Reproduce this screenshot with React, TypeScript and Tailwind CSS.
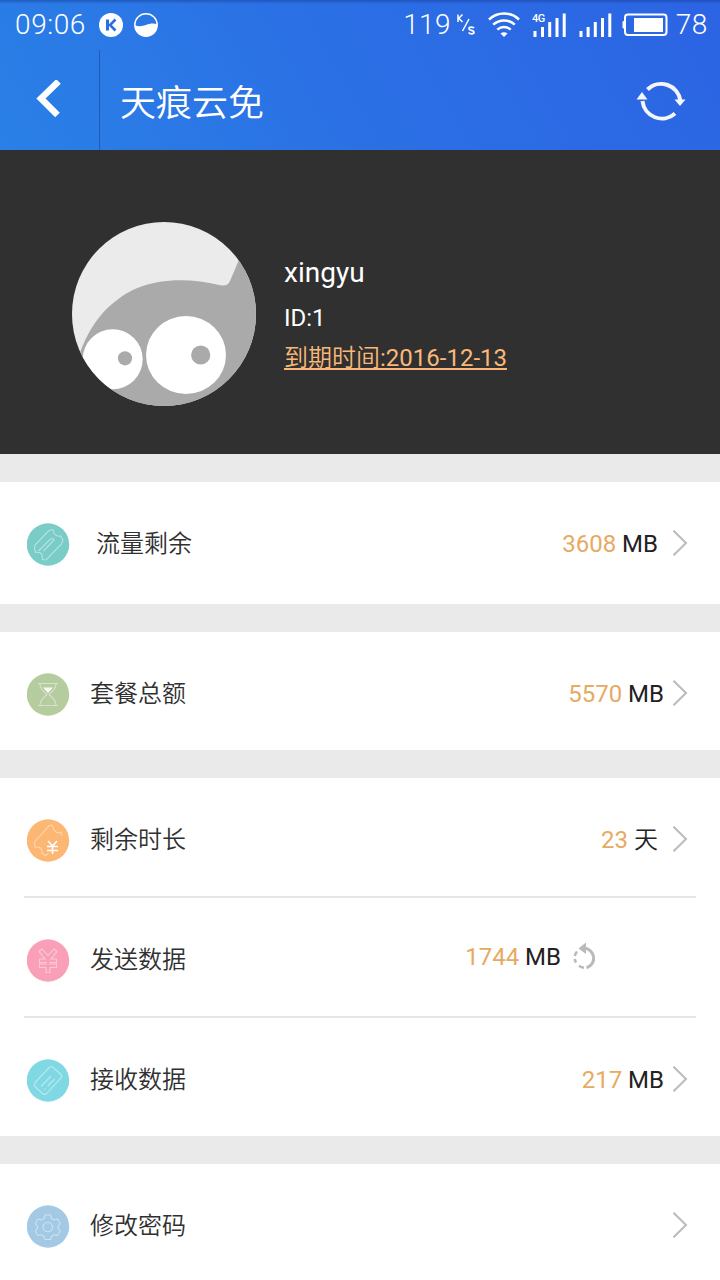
import type { ReactNode } from 'react';
import clsx from 'clsx';

interface RowProps {
  icon: ReactNode;
  label: string;
  value?: string;
  unit?: string;
  // some rows use slightly different spacing around the label and the value
  labelClass?: string;
  valueClass?: string;
  rowClass?: string;
  trailing?: ReactNode;
}

function StatusBar() {
  return (
    <div className="flex h-[50px] items-center pl-[15px] pr-[12px] text-[28px] font-[350] leading-none tracking-[0.6px] text-white">
      <span className="w-[84px]">09:06</span>
      <svg width="24" height="24" viewBox="0 0 24 24" className="mr-[11px]">
        <circle cx="12" cy="12" r="12" fill="#fff" />
        <path d="M8.500 6.500v11" fill="none" stroke="#2c6fe2" strokeWidth="3" />
        <path d="M16.500 6.500 11 12l5.500 5.500" fill="none" stroke="#2c6fe2" strokeWidth="2.600" />
      </svg>
      <svg width="24" height="24" viewBox="0 0 24 24">
        <circle cx="12" cy="12" r="11.200" fill="none" stroke="#fff" strokeWidth="1.400" />
        <path d="M.8 12.200C5 13.800 8.500 13.300 12 12s7-2 11.200-.8A11.300 11.300 0 0 1 12 23.300 11.300 11.300 0 0 1 .8 12.200z" fill="#fff" />
      </svg>

      <div className="ml-auto flex items-center">
        <span className="tracking-[0.300px]">119</span>
        <svg width="20" height="24" viewBox="0 0 20 24" className="ml-[5px]" fill="none" stroke="#fff">
          <path d="M2 1.500v7.500M6.500 1.500 2.800 5.200 6.500 9" strokeWidth="1.500" />
          <path d="M13 6 6.500 18" strokeWidth="1.500" />
          <path d="M18 15.200c-.5-1.200-5-1.600-5 .5 0 2.200 5 1.200 5 3.500 0 2.200-4.800 2-5.200.2" strokeWidth="1.700" />
        </svg>
        <svg width="32" height="26" viewBox="0 0 32 26" className="ml-[12px]" fill="none" stroke="#fff" strokeWidth="2.500">
          <path d="M1 7.500c8.500-8 21.500-8 30 0" />
          <path d="M5.200 12.600c6.200-5.600 15.400-5.600 21.600 0" />
          <path d="M9.300 17.600c4-3.500 9.400-3.500 13.400 0" />
          <path d="M12.500 21.500c2-1.700 5-1.700 7 0L16 25z" fill="#fff" stroke="none" />
        </svg>
        <svg width="34" height="26" viewBox="0 0 34 26" className="ml-[12px]" fill="#fff">
          <text x="0" y="10" fontSize="11" fontWeight="500" letterSpacing="-0.500">4G</text>
          <path d="M1.500 19h3v6h-3zM9 15h3v10H9zM16.200 10h3v15h-3zM23.500 6h3v19h-3zM30.700 1.500h3V25h-3z" />
        </svg>
        <svg width="33" height="26" viewBox="0 0 33 26" className="ml-[13px]" fill="#fff">
          <path d="M.5 19h3v6h-3zM7.600 15h3v10h-3zM14.800 10h3v15h-3zM22 6h3v19h-3zM29.300 1.500h3V25h-3z" />
        </svg>
        <svg width="46" height="24" viewBox="0 0 46 24" className="ml-[10px]">
          <rect x="3" y="1.500" width="41.500" height="20.500" rx="3" fill="none" stroke="#fff" strokeWidth="2" />
          <rect x="0.500" y="8" width="2.500" height="7.500" rx="1" fill="#fff" />
          <rect x="12" y="5" width="29" height="14" fill="#fff" />
        </svg>
        <span className="ml-[8px]">78</span>
      </div>
    </div>
  );
}

function Header() {
  return (
    <header className="h-[150px] shrink-0 bg-[linear-gradient(180deg,rgba(20,60,150,0.5)_0,rgba(20,60,150,0)_4px),linear-gradient(60deg,#2a80e6_0%,#2b6fe5_50%,#2c64e3_100%)]">
      <StatusBar />
      <div className="flex h-[100px] items-center">
        <div className="flex h-full w-[100px] items-center border-r border-[#2258b8] pl-[35px]">
          <svg width="28" height="40" viewBox="0 0 28 40" fill="none" stroke="#fff" strokeWidth="6.500">
            <path d="M23.500 1.500 6 18.500 22.500 35" />
          </svg>
        </div>
        <h1 className="ml-[20px] pt-[7px] text-[36px] font-[350] leading-none text-white">天痕云免</h1>
        <svg width="50" height="46" viewBox="0 0 50 46" className="ml-auto mr-[34px] mt-[2px]" fill="none" stroke="#f4f6fb" strokeWidth="4">
          <path d="M11.500 11.500A19.500 19.500 0 0 1 44.500 23" />
          <path d="M39 35.500A19.500 19.500 0 0 1 6.500 23" />
          <path d="M38.500 21.500h11L44 28z" fill="#f4f6fb" stroke="none" />
          <path d="M0.500 21.500h11L6 14z" fill="#f4f6fb" stroke="none" />
        </svg>
      </div>
    </header>
  );
}

function Avatar() {
  return (
    <svg width="184" height="184" viewBox="0 0 184 184">
      <clipPath id="face">
        <circle cx="92" cy="92" r="92" />
      </clipPath>
      <g clipPath="url(#face)">
        <rect width="184" height="184" fill="#ebebeb" />
        <path d="M6 137C18 99 39 78 64.700 66.300 92 55.500 121 57 147 63c6 1.200 9 .5 11-4l14-33 20-10v170H0z" fill="#aaa" />
        <circle cx="40.700" cy="137.300" r="30" fill="#fff" />
        <circle cx="53" cy="136.300" r="7.100" fill="#aaa" />
        <ellipse cx="114" cy="133" rx="40" ry="39" fill="#fff" />
        <circle cx="128.700" cy="133" r="9.600" fill="#aaa" />
      </g>
    </svg>
  );
}

function Profile() {
  return (
    <section className="flex h-[304px] shrink-0 items-start bg-[#303030] pl-[72px] pt-[72px]">
      <Avatar />
      <div className="ml-[28px] pt-[32px] text-white">
        <div className="text-[28px] leading-[38px]">xingyu</div>
        <div className="mt-[8px] text-[24px] leading-[36px]">ID:1</div>
        <div className="mt-[4px] text-[24px] leading-[36px] text-[#fab878] underline decoration-2 underline-offset-2">
          <span className="font-[350]">到期时间</span>:2016-12-13
        </div>
      </div>
    </section>
  );
}

function Badge({ color, children }: { color: string; children: ReactNode }) {
  return (
    <svg width="43" height="43" viewBox="0.500 0 43 43" className="shrink-0" fill="none" stroke="#fff" strokeOpacity="0.450" strokeWidth="1.100">
      <circle cx="21.500" cy="21.500" r="21.200" fill={color} stroke="none" />
      {children}
    </svg>
  );
}

const ticketIcon = (
  <Badge color="#79ccc8">
    <path d="M22 8 25.500 6.500q2 .5 2 4 2.500 3.500 6.500 2.500l2.500 4-1.500 4-15.500 16-3.500-.5-.5-4.500q-1-3.500-6.500-2.500L8 26l.5-4z" />
    <path d="M24 16 13.500 26.500q-2 2-1 .5M24 16q3-1 3.500 1L17 28" />
  </Badge>
);

const hourglassIcon = (
  <Badge color="#b5cc9e">
    <path d="M11.500 10.500h20M11.500 32.500h20M13.500 11q0 5 7 10.500-7 5.500-7 10.500M29.500 11q0 5-7 10.500 7 5.500 7 10.500" />
    <path d="M16.500 14.500h10l-5 5.500z" fill="#fff" fillOpacity="0.950" stroke="none" />
  </Badge>
);

const couponIcon = (
  <Badge color="#fdb775">
    <path d="M8 23 22.500 7q3-2 4 .5l1 3.500q3 4 7 2.500l1 3M8 23l.5 5 4.500.5q3 1.500 2.500 6l3.500 2 3-2" />
    <path d="m21.500 22 4.500 5 4.500-5M20.500 27.500h11M20.500 31.500h11M26 27v8" stroke="#fff" strokeOpacity="1" strokeWidth="1.600" />
  </Badge>
);

const yenIcon = (
  <Badge color="#f99fb7">
    <path d="m12.500 12.500 3-2.500 6 6.500 6-6.500 3 2.500-6 7.500h5.500v3.500h-6.500V25H30v3.500h-6.500v5h-4v-5H13V25h6.500v-1.500H13V20h5.500z" />
  </Badge>
);

const cardIcon = (
  <Badge color="#7fd8e3">
    <path d="m8.200 24 14.500-15.500q2-2 4 0l7.800 7q1.500 1.500 0 3.300L20 34.500q-2 2-4 0l-7.500-7q-1.500-1.500-.3-3.500z" />
    <path d="M24.500 17 14.500 27.500M28 20 21 27.500M19 29.500l-1 1" />
  </Badge>
);

const gearIcon = (
  <Badge color="#a3c9e5">
    <path d="m18.500 10 5.500 0 1 3.500 2.500 1.500 3.500-1 2.800 4.500-2.300 2.800v2l2.300 2.700-2.800 4.500-3.500-.8-2.500 1.600-1 3.200h-5.500l-1-3.200-2.500-1.600-3.500.8L8.700 26l2.300-2.700v-2l-2.300-2.800L11.500 14l3.500 1 2.500-1.500z" strokeLinejoin="round" />
    <circle cx="21.300" cy="22" r="4.800" />
  </Badge>
);

const chevron = (
  <svg width="16" height="28" viewBox="0 0 16 28" fill="none" stroke="#bcbcbc" strokeWidth="2.100">
    <path d="m1.500 1.700 12.500 12.300L1.500 26.300" />
  </svg>
);

const resetIcon = (
  <svg width="26" height="28" viewBox="0 0 26 28" fill="none" stroke="#bababa" strokeWidth="3">
    <path d="M12 6.200a10 10 0 0 1 2.500 19.600" />
    <path d="M12 25.800a10 10 0 0 1-5-2M4 20.500a10 10 0 0 1-1.300-3.500M2.800 14A10 10 0 0 1 5 9.500" strokeWidth="2.600" />
    <path d="M14 .5v11.500L6.500 6.500z" fill="#bababa" stroke="none" />
  </svg>
);

function Row({ icon, label, value, unit, labelClass, valueClass, rowClass, trailing = chevron }: RowProps) {
  return (
    <div className={clsx('flex items-center bg-white pl-[27px] text-[24px] leading-none', rowClass ?? 'h-[118px] pr-[32px] pt-[6px]')}>
      {icon}
      <span className={clsx('font-[350] text-[#303030]', labelClass ?? 'ml-[20px]')}>{label}</span>
      <div className={clsx('ml-auto flex items-center', valueClass ?? 'gap-[8px] pb-[2px]')}>
        {value && (
          <span className="whitespace-nowrap pt-[2px] text-[#222]">
            <span className="text-[#e6aa62]">{value}</span> <span className={clsx(unit === '天' && 'font-[350]')}>{unit}</span>
          </span>
        )}
        {trailing}
      </div>
    </div>
  );
}

function Divider() {
  return <div className="mx-6 h-[2px] bg-[#e6e6e6]" />;
}

export default function App() {
  return (
    <div className="flex h-[1280px] w-[720px] flex-col overflow-hidden bg-[#eaeaea] font-[Roboto,'Noto_Sans_CJK_SC',sans-serif]">
      <Header />
      <Profile />

      <div className="mt-7 shrink-0">
        <Row
          icon={ticketIcon}
          label="流量剩余"
          value="3608"
          unit="MB"
          labelClass="ml-[26px] pb-[1px]"
          valueClass="gap-[14px] pb-[3px]"
          rowClass="h-[122px] pr-[32px] pt-[3px]"
        />
      </div>

      <div className="mt-7 shrink-0">
        <Row icon={hourglassIcon} label="套餐总额" value="5570" unit="MB" />
      </div>

      <div className="mt-7 shrink-0 bg-white">
        <Row icon={couponIcon} label="剩余时长" value="23" unit="天" valueClass="gap-[14px] pb-[2px]" />
        <Divider />
        <Row
          icon={yenIcon}
          label="发送数据"
          value="1744"
          unit="MB"
          valueClass="gap-[11px] pb-[8px]"
          rowClass="h-[118px] pr-[122px] pt-[6px]"
          trailing={resetIcon}
        />
        <Divider />
        <Row icon={cardIcon} label="接收数据" value="217" unit="MB" />
      </div>

      <div className="mt-7 shrink-0 bg-white">
        <Row icon={gearIcon} label="修改密码" />
      </div>
    </div>
  );
}
